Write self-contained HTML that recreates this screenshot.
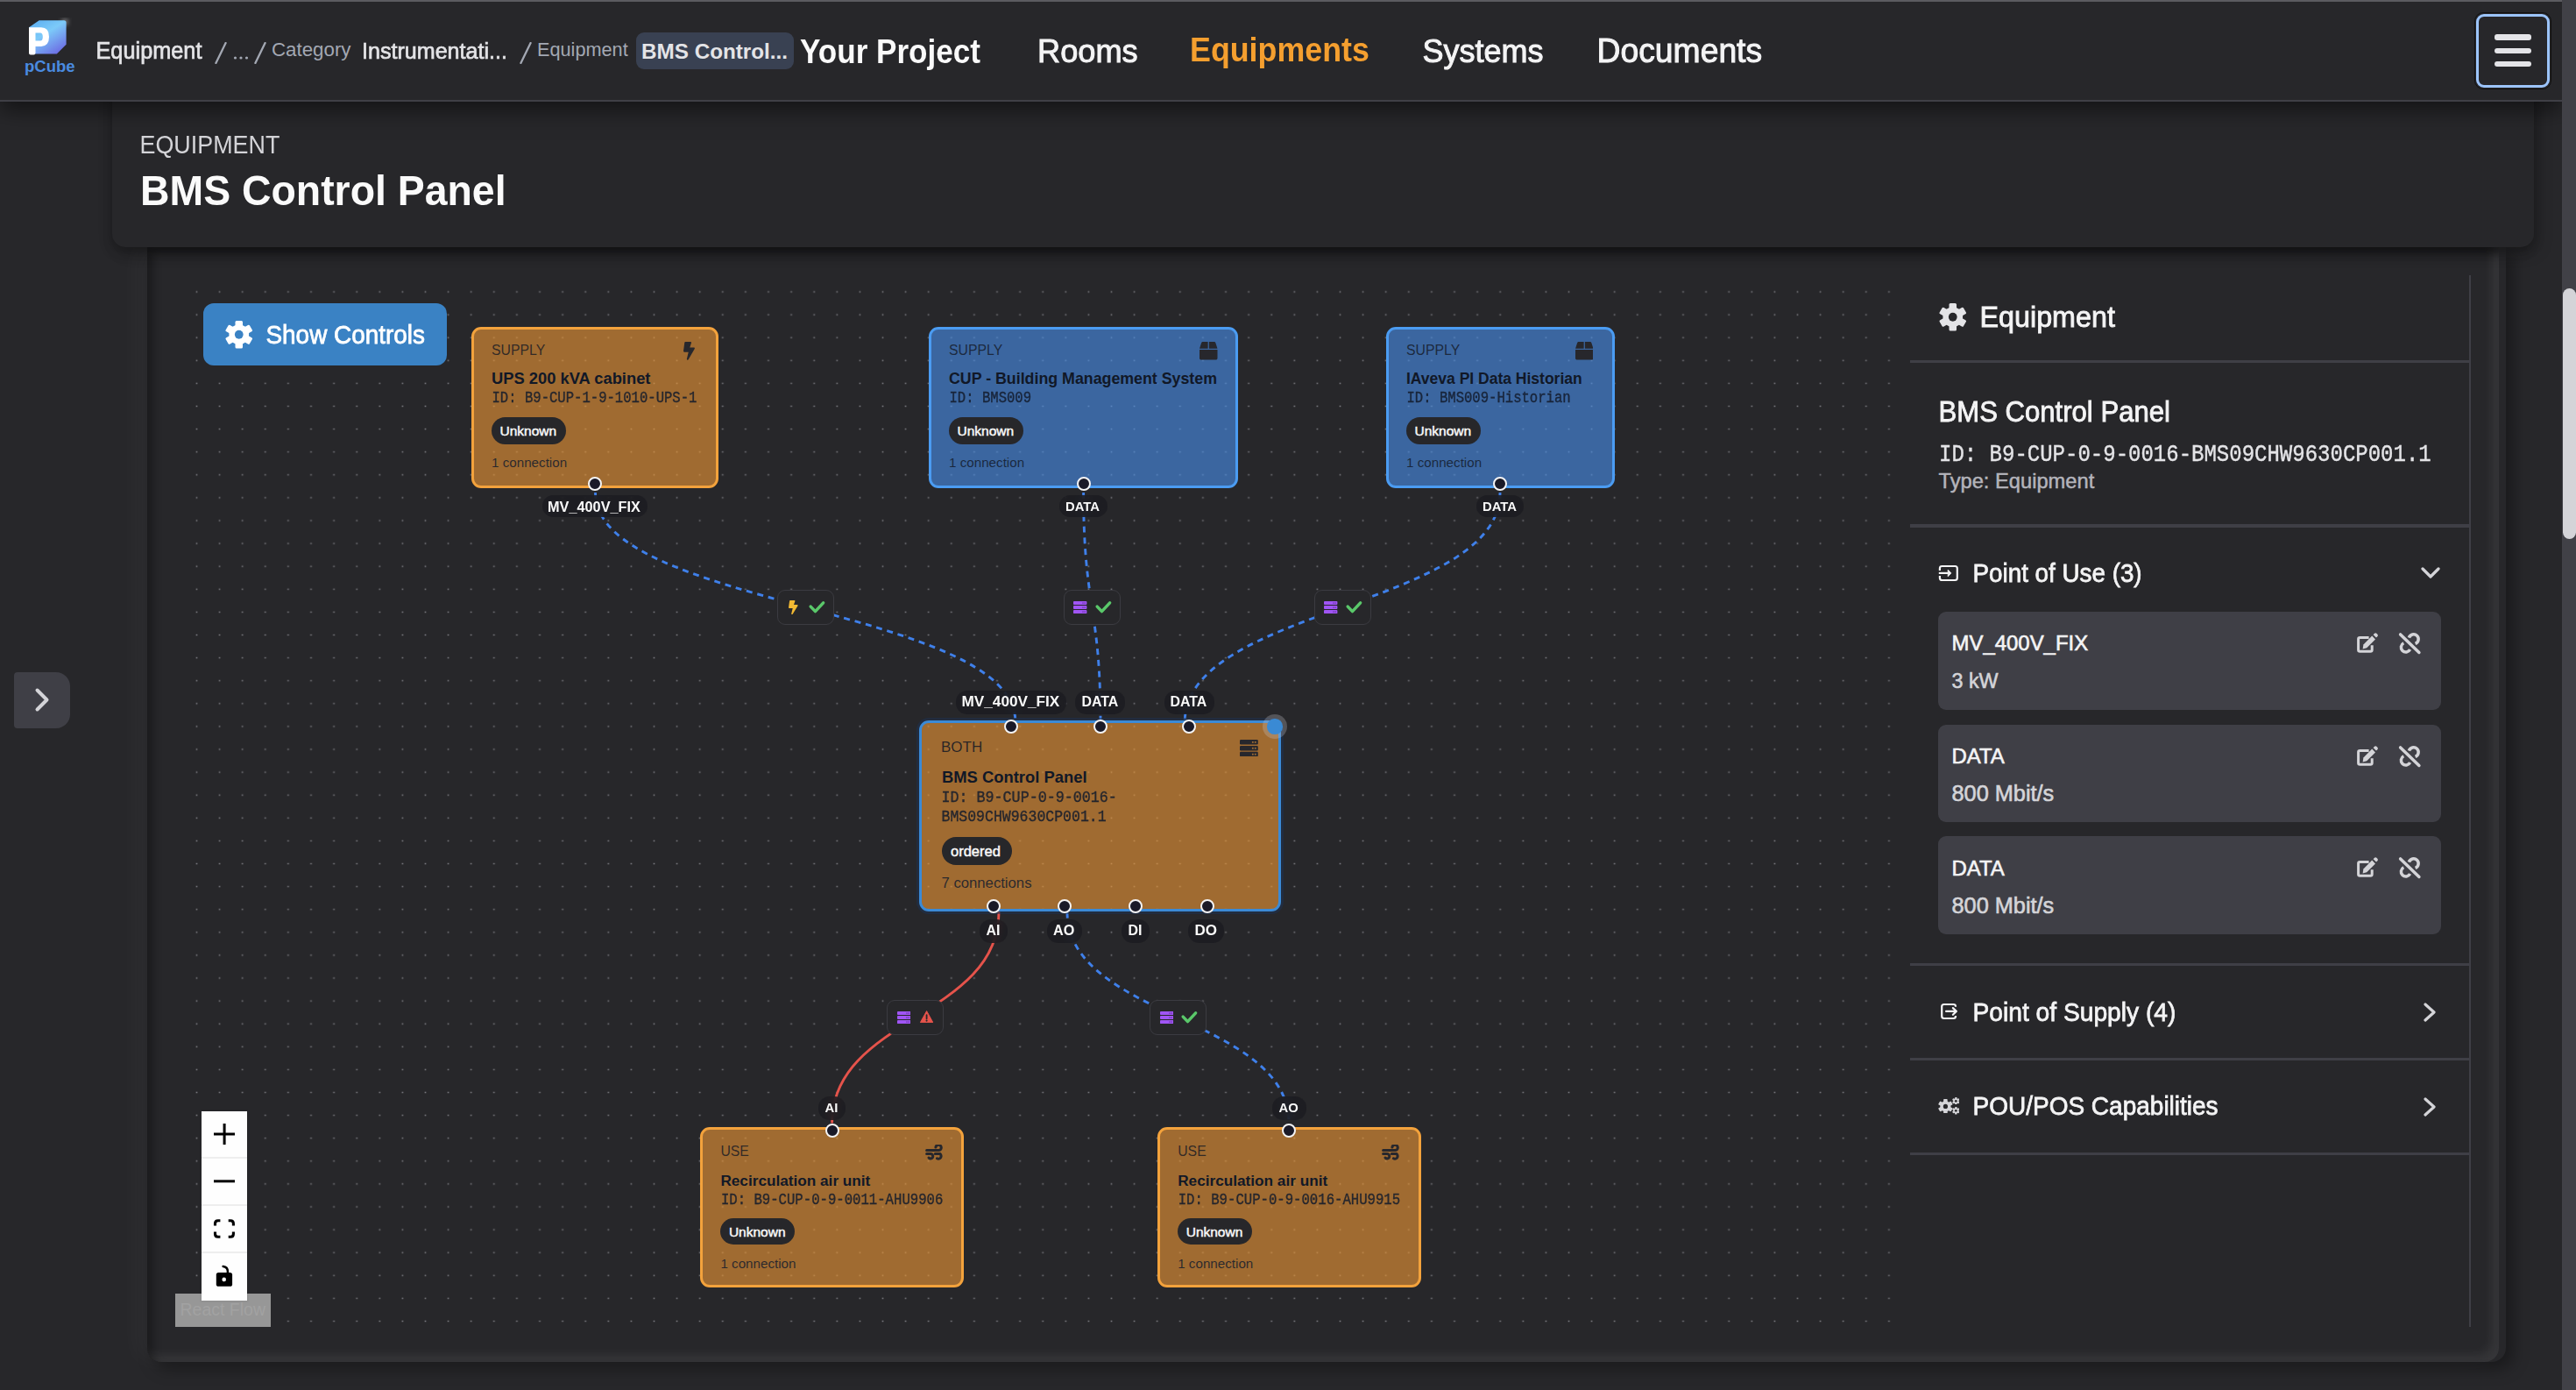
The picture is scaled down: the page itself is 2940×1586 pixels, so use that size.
<!DOCTYPE html>
<html><head><meta charset="utf-8"><title>BMS Control Panel</title>
<style>
html,body{margin:0;padding:0;width:2940px;height:1586px;overflow:hidden;background:#27272a;}
.a{position:absolute;}
.t{position:absolute;white-space:nowrap;}
</style></head><body>
<div class="a" style="left:0;top:0;width:2940px;height:1586px;background:#27272a"></div>
<div class="a" style="left:168.0px;top:282.0px;width:2692.0px;height:1272.0px;background:#27272a;border-radius:0 0 16px 16px;box-shadow:8px 8px 18px rgba(0,0,0,0.35), -14px 0 26px rgba(255,255,255,0.03)"></div>
<div class="a" style="left:168.0px;top:282.0px;width:2684.0px;height:1272.0px;background:#27272a;border-radius:0 0 16px 16px;box-shadow:inset 7px 7px 10px rgba(0,0,0,0.30), inset -8px -8px 12px rgba(255,255,255,0.07)"></div>
<div class="a" style="left:128.0px;top:100.0px;width:2764.0px;height:182.0px;background:#27272a;border-radius:0 0 15px 15px;box-shadow:0 5px 12px rgba(0,0,0,0.2), 6px 8px 18px rgba(0,0,0,0.14), -4px 8px 16px rgba(0,0,0,0.06)"></div>
<div class="t" style="left:159.5px;top:153.1px;font:normal 26.90px/26.90px 'Liberation Sans', sans-serif;color:#d4d4d8;transform:scaleY(1.07);transform-origin:0 22.86px;">EQUIPMENT</div>
<div class="t" style="left:160.0px;top:195.3px;font:bold 46.40px/46.40px 'Liberation Sans', sans-serif;color:#fafafa;transform:scaleY(1.05);transform-origin:0 39.44px;">BMS Control Panel</div>
<div class="a" style="left:0.0px;top:0.0px;width:2924.0px;height:116.0px;background:#27272a;border-bottom:2px solid #3f3f46;box-sizing:border-box;box-shadow:0 8px 24px rgba(0,0,0,0.55)"></div>
<div class="a" style="left:0.0px;top:0.0px;width:2924.0px;height:2.0px;background:#5b5b60"></div>
<svg class="a" style="left:28px;top:20px" width="56" height="48" viewBox="0 0 56 48">
<defs><linearGradient id="lg" x1="0.15" y1="0" x2="0.85" y2="1"><stop offset="0" stop-color="#5eb0f2"/><stop offset="0.4" stop-color="#7ccaf9"/><stop offset="1" stop-color="#6b66e2"/></linearGradient>
<filter id="gl" x="-50%" y="-50%" width="200%" height="200%"><feGaussianBlur stdDeviation="2.5"/></filter></defs>
<circle cx="46" cy="5" r="4" fill="rgba(255,255,255,0.35)" filter="url(#gl)"/>
<path d="M5,11.3 L16.7,3.2 H45 Q47.6,3.2 47.6,5.8 V30.7 L36.8,41.6 H9 Q5,41.6 5,37.6 Z" fill="url(#lg)"/>
<path d="M5,11.3 H19 Q28,11.3 28,22.1 Q28,32.9 19,32.9 H12.5 V40.4 Q12.5,42.4 10.5,42.4 H7 Q5,42.4 5,40.4 Z M12.5,17.6 V26.6 H18 Q20.8,26.6 20.8,22.1 Q20.8,17.6 18,17.6 Z" fill="#fff" fill-rule="evenodd"/>
</svg>
<div class="t" style="left:28.0px;top:66.8px;font:bold 18.50px/18.50px 'Liberation Sans', sans-serif;color:#4a8be0;">pCube</div>
<div class="t" style="left:109.5px;top:45.9px;font:normal 25.30px/25.30px 'Liberation Sans', sans-serif;color:#e4e4e7;transform:scaleY(1.06);transform-origin:0 21.50px;-webkit-text-stroke:0.66px #e4e4e7;">Equipment</div>
<svg class="a" style="left:244.5px;top:48.0px;" width="14.0" height="25.0" viewBox="0 0 14.00 25.00" preserveAspectRatio="none"><path d="M12.6,1 L1.4,24" stroke="#a3a8b3" stroke-width="2.3" stroke-linecap="round"/></svg>
<svg class="a" style="left:289.5px;top:48.0px;" width="14.0" height="25.0" viewBox="0 0 14.00 25.00" preserveAspectRatio="none"><path d="M12.6,1 L1.4,24" stroke="#a3a8b3" stroke-width="2.3" stroke-linecap="round"/></svg>
<svg class="a" style="left:592.8px;top:48.0px;" width="14.0" height="25.0" viewBox="0 0 14.00 25.00" preserveAspectRatio="none"><path d="M12.6,1 L1.4,24" stroke="#a3a8b3" stroke-width="2.3" stroke-linecap="round"/></svg>
<svg class="a" style="left:266.0px;top:63.0px;" width="19.0" height="6.0" viewBox="0 0 19.00 6.00" preserveAspectRatio="none"><circle cx="2.5" cy="3" r="1.6" fill="#a3a8b3"/><circle cx="9" cy="3" r="1.6" fill="#a3a8b3"/><circle cx="15.5" cy="3" r="1.6" fill="#a3a8b3"/></svg>
<div class="t" style="left:310.0px;top:46.3px;font:normal 22.30px/22.30px 'Liberation Sans', sans-serif;color:#a3a8b3;">Category</div>
<div class="t" style="left:413.0px;top:46.1px;font:normal 25.10px/25.10px 'Liberation Sans', sans-serif;color:#e4e4e7;transform:scaleY(1.06);transform-origin:0 21.34px;-webkit-text-stroke:0.65px #e4e4e7;">Instrumentati...</div>
<div class="t" style="left:613.0px;top:46.4px;font:normal 21.70px/21.70px 'Liberation Sans', sans-serif;color:#a3a8b3;">Equipment</div>
<div class="a" style="left:726.0px;top:36.5px;width:180.0px;height:42.9px;background:#394152;border-radius:9px"></div>
<div class="t" style="left:732.0px;top:46.8px;font:bold 24.25px/24.25px 'Liberation Sans', sans-serif;color:#e4e4e7;">BMS Control...</div>
<div class="t" style="left:913.0px;top:41.7px;font:bold 35.10px/35.10px 'Liberation Sans', sans-serif;color:#fafafa;transform:scaleY(1.08);transform-origin:0 29.84px;">Your Project</div>
<div class="t" style="left:1184.0px;top:40.7px;font:normal 36.20px/36.20px 'Liberation Sans', sans-serif;color:#f4f4f5;transform:scaleY(1.03);transform-origin:0 30.77px;-webkit-text-stroke:0.94px #f4f4f5;">Rooms</div>
<div class="t" style="left:1358.0px;top:41.1px;font:bold 35.80px/35.80px 'Liberation Sans', sans-serif;color:#f59f2f;transform:scaleY(1.06);transform-origin:0 30.43px;">Equipments</div>
<div class="t" style="left:1623.5px;top:40.9px;font:normal 36.00px/36.00px 'Liberation Sans', sans-serif;color:#f4f4f5;transform:scaleY(1.03);transform-origin:0 30.60px;-webkit-text-stroke:0.94px #f4f4f5;">Systems</div>
<div class="t" style="left:1822.5px;top:39.8px;font:normal 37.30px/37.30px 'Liberation Sans', sans-serif;color:#f4f4f5;transform:scaleY(1.02);transform-origin:0 31.70px;-webkit-text-stroke:0.97px #f4f4f5;">Documents</div>
<div class="a" style="left:2824.0px;top:14.0px;width:88.0px;height:88.0px;border:1px solid #111;border-radius:10px;box-sizing:border-box"></div>
<div class="a" style="left:2826.0px;top:16.0px;width:84.0px;height:84.0px;border:3px solid #9cc4fb;border-radius:9px;box-sizing:border-box"></div>
<div class="a" style="left:2846.7px;top:39.0px;width:42.3px;height:6.5px;background:#e4e4e7;border-radius:3px"></div>
<div class="a" style="left:2846.7px;top:54.8px;width:42.3px;height:6.5px;background:#e4e4e7;border-radius:3px"></div>
<div class="a" style="left:2846.7px;top:69.5px;width:42.3px;height:6.5px;background:#e4e4e7;border-radius:3px"></div>
<div class="a" style="left:2924.0px;top:0.0px;width:16.0px;height:1586.0px;background:#414147"></div>
<div class="a" style="left:2925.0px;top:329.0px;width:15.0px;height:286.0px;background:#d4d4d8;border-radius:8px"></div>
<div class="a" style="left:16.0px;top:767.0px;width:64.0px;height:64.0px;background:#3f3f46;border-radius:4px 16px 16px 4px"></div>
<svg class="a" style="left:38.0px;top:784.0px;" width="22.0" height="29.0" viewBox="0 0 22.00 29.00" preserveAspectRatio="none"><path d="M4.5,3.5 L15.5,14.5 L4.5,25.5" fill="none" stroke="#d4d4d8" stroke-width="4" stroke-linecap="round" stroke-linejoin="round"/></svg>
<svg class="a" style="left:200px;top:314px" width="1980" height="1200">
<defs><pattern id="dots" x="11.45" y="5.95" width="26.1" height="26.1" patternUnits="userSpaceOnUse">
<rect x="12.2" y="12.3" width="1.7" height="1.5" fill="#77777e"/></pattern></defs>
<rect width="100%" height="100%" fill="url(#dots)"/></svg>
<svg class="a" style="left:200px;top:314px" width="1980" height="1200"><path d="M479.5,248.0 C479.5,379.0 958.9,379.0 958.9,509.9" fill="none" stroke="#3f80ea" stroke-width="2.9" stroke-dasharray="7 5.8"/><path d="M1036.6,248.0 C1036.6,379.0 1056.0,379.0 1056.0,509.9" fill="none" stroke="#3f80ea" stroke-width="2.9" stroke-dasharray="7 5.8"/><path d="M1512.0,248.0 C1512.0,379.0 1152.2,379.0 1152.2,509.9" fill="none" stroke="#3f80ea" stroke-width="2.9" stroke-dasharray="7 5.8"/><path d="M940.0,726.5 C940.0,847.0 749.6,847.0 749.6,967.4" fill="none" stroke="#e5534b" stroke-width="2.9"/><path d="M1018.0,726.5 C1018.0,847.0 1271.0,847.0 1271.0,967.4" fill="none" stroke="#3f80ea" stroke-width="2.9" stroke-dasharray="7 5.8"/></svg>
<div class="a" style="left:886.7px;top:673.2px;width:65.0px;height:39.5px;background:#27272a;border:1.6px solid #3b3b41;border-radius:9px;box-sizing:border-box"></div>
<svg class="a" style="left:900.2px;top:685.0px;" width="10.6" height="16.2" viewBox="0 0 320 512" preserveAspectRatio="none"><path d="M296 160H180.6l42.6-129.8C227.2 15 215.7 0 200 0H56C44 0 33.8 8.9 32.2 20.8l-32 240C-1.7 275.2 9.5 288 24 288h118.7L96.6 482.5c-3.6 15.2 8 29.5 23.3 29.5 8.4 0 16.4-4.4 20.8-12l176-304c9.3-15.9-2.2-36-20.7-36z" fill="#f2b933"/></svg>
<svg class="a" style="left:921.7px;top:684.2px;" width="21.0" height="17.0" viewBox="0 0 21.00 17.00" preserveAspectRatio="none"><path d="M3.2,8.1 L8.5,13.6 L17.6,3.9" fill="none" stroke="#5ac86a" stroke-width="3.5" stroke-linecap="round" stroke-linejoin="round"/></svg>
<div class="a" style="left:1213.8px;top:673.2px;width:65.0px;height:39.5px;background:#27272a;border:1.6px solid #3b3b41;border-radius:9px;box-sizing:border-box"></div>
<svg class="a" style="left:1225.4px;top:685.9px;" width="15.4" height="14.0" viewBox="0 0 15.40 14.00" preserveAspectRatio="none"><rect x="0" y="0.00" width="15.40" height="3.97" rx="0.87" fill="#a055f5"/><rect x="10.32" y="1.43" width="1.31" height="1.27" fill="rgba(60,20,90,0.55)"/><rect x="12.47" y="1.43" width="1.31" height="1.27" fill="rgba(60,20,90,0.55)"/><rect x="0" y="5.02" width="15.40" height="3.97" rx="0.87" fill="#a055f5"/><rect x="10.32" y="6.44" width="1.31" height="1.27" fill="rgba(60,20,90,0.55)"/><rect x="12.47" y="6.44" width="1.31" height="1.27" fill="rgba(60,20,90,0.55)"/><rect x="0" y="10.03" width="15.40" height="3.97" rx="0.87" fill="#a055f5"/><rect x="10.32" y="11.46" width="1.31" height="1.27" fill="rgba(60,20,90,0.55)"/><rect x="12.47" y="11.46" width="1.31" height="1.27" fill="rgba(60,20,90,0.55)"/></svg>
<svg class="a" style="left:1248.8px;top:684.2px;" width="21.0" height="17.0" viewBox="0 0 21.00 17.00" preserveAspectRatio="none"><path d="M3.2,8.1 L8.5,13.6 L17.6,3.9" fill="none" stroke="#5ac86a" stroke-width="3.5" stroke-linecap="round" stroke-linejoin="round"/></svg>
<div class="a" style="left:1499.6px;top:673.2px;width:65.0px;height:39.5px;background:#27272a;border:1.6px solid #3b3b41;border-radius:9px;box-sizing:border-box"></div>
<svg class="a" style="left:1511.2px;top:685.9px;" width="15.4" height="14.0" viewBox="0 0 15.40 14.00" preserveAspectRatio="none"><rect x="0" y="0.00" width="15.40" height="3.97" rx="0.87" fill="#a055f5"/><rect x="10.32" y="1.43" width="1.31" height="1.27" fill="rgba(60,20,90,0.55)"/><rect x="12.47" y="1.43" width="1.31" height="1.27" fill="rgba(60,20,90,0.55)"/><rect x="0" y="5.02" width="15.40" height="3.97" rx="0.87" fill="#a055f5"/><rect x="10.32" y="6.44" width="1.31" height="1.27" fill="rgba(60,20,90,0.55)"/><rect x="12.47" y="6.44" width="1.31" height="1.27" fill="rgba(60,20,90,0.55)"/><rect x="0" y="10.03" width="15.40" height="3.97" rx="0.87" fill="#a055f5"/><rect x="10.32" y="11.46" width="1.31" height="1.27" fill="rgba(60,20,90,0.55)"/><rect x="12.47" y="11.46" width="1.31" height="1.27" fill="rgba(60,20,90,0.55)"/></svg>
<svg class="a" style="left:1534.6px;top:684.2px;" width="21.0" height="17.0" viewBox="0 0 21.00 17.00" preserveAspectRatio="none"><path d="M3.2,8.1 L8.5,13.6 L17.6,3.9" fill="none" stroke="#5ac86a" stroke-width="3.5" stroke-linecap="round" stroke-linejoin="round"/></svg>
<div class="a" style="left:1012.3px;top:1141.2px;width:65.0px;height:39.5px;background:#27272a;border:1.6px solid #3b3b41;border-radius:9px;box-sizing:border-box"></div>
<svg class="a" style="left:1023.9px;top:1153.9px;" width="15.4" height="14.0" viewBox="0 0 15.40 14.00" preserveAspectRatio="none"><rect x="0" y="0.00" width="15.40" height="3.97" rx="0.87" fill="#a055f5"/><rect x="10.32" y="1.43" width="1.31" height="1.27" fill="rgba(60,20,90,0.55)"/><rect x="12.47" y="1.43" width="1.31" height="1.27" fill="rgba(60,20,90,0.55)"/><rect x="0" y="5.02" width="15.40" height="3.97" rx="0.87" fill="#a055f5"/><rect x="10.32" y="6.44" width="1.31" height="1.27" fill="rgba(60,20,90,0.55)"/><rect x="12.47" y="6.44" width="1.31" height="1.27" fill="rgba(60,20,90,0.55)"/><rect x="0" y="10.03" width="15.40" height="3.97" rx="0.87" fill="#a055f5"/><rect x="10.32" y="11.46" width="1.31" height="1.27" fill="rgba(60,20,90,0.55)"/><rect x="12.47" y="11.46" width="1.31" height="1.27" fill="rgba(60,20,90,0.55)"/></svg>
<svg class="a" style="left:1050.0px;top:1153.0px;" width="15.2" height="14.0" viewBox="0 0 15.20 14.00" preserveAspectRatio="none"><path d="M7.60,0.6 L14.80,13.60 L0.4,13.60 Z" fill="#e5534b" stroke="#e5534b" stroke-width="1" stroke-linejoin="round"/><path d="M7.60,5.04 V9.24" stroke="#27272a" stroke-width="1.82" stroke-linecap="round"/><circle cx="7.60" cy="11.62" r="1.06" fill="#27272a"/></svg>
<div class="a" style="left:1312.0px;top:1141.2px;width:65.0px;height:39.5px;background:#27272a;border:1.6px solid #3b3b41;border-radius:9px;box-sizing:border-box"></div>
<svg class="a" style="left:1323.6px;top:1153.9px;" width="15.4" height="14.0" viewBox="0 0 15.40 14.00" preserveAspectRatio="none"><rect x="0" y="0.00" width="15.40" height="3.97" rx="0.87" fill="#a055f5"/><rect x="10.32" y="1.43" width="1.31" height="1.27" fill="rgba(60,20,90,0.55)"/><rect x="12.47" y="1.43" width="1.31" height="1.27" fill="rgba(60,20,90,0.55)"/><rect x="0" y="5.02" width="15.40" height="3.97" rx="0.87" fill="#a055f5"/><rect x="10.32" y="6.44" width="1.31" height="1.27" fill="rgba(60,20,90,0.55)"/><rect x="12.47" y="6.44" width="1.31" height="1.27" fill="rgba(60,20,90,0.55)"/><rect x="0" y="10.03" width="15.40" height="3.97" rx="0.87" fill="#a055f5"/><rect x="10.32" y="11.46" width="1.31" height="1.27" fill="rgba(60,20,90,0.55)"/><rect x="12.47" y="11.46" width="1.31" height="1.27" fill="rgba(60,20,90,0.55)"/></svg>
<svg class="a" style="left:1347.0px;top:1152.2px;" width="21.0" height="17.0" viewBox="0 0 21.00 17.00" preserveAspectRatio="none"><path d="M3.2,8.1 L8.5,13.6 L17.6,3.9" fill="none" stroke="#5ac86a" stroke-width="3.5" stroke-linecap="round" stroke-linejoin="round"/></svg>
<div class="a" style="left:538.0px;top:372.5px;width:282.4px;height:184.0px;background:rgba(236,150,54,0.62);border:3px solid #f3a23c;border-radius:11px;box-sizing:border-box;"></div>
<div class="t" style="left:561.0px;top:392.4px;font:normal 15.80px/15.80px 'Liberation Sans', sans-serif;color:rgba(20,24,36,0.8);">SUPPLY</div>
<div class="t" style="left:561.0px;top:423.1px;font:bold 18.35px/18.35px 'Liberation Sans', sans-serif;color:#111827;">UPS 200 kVA cabinet</div>
<div class="t" style="left:561.5px;top:447.8px;font:normal 15.60px/15.60px 'Liberation Mono', monospace;color:rgba(20,28,45,0.85);transform:scaleY(1.12);transform-origin:0 11.86px;-webkit-text-stroke:0.35px rgba(20,28,45,0.85);">ID: B9-CUP-1-9-1010-UPS-1</div>
<div class="a" style="left:561.0px;top:476.0px;width:85.1px;height:31.0px;background:#27272a;border-radius:16px"></div>
<div class="t" style="left:570.5px;top:483.8px;font:normal 15.50px/15.50px 'Liberation Sans', sans-serif;color:#fafafa;-webkit-text-stroke:0.46px #fafafa;">Unknown</div>
<div class="t" style="left:561.0px;top:520.1px;font:normal 15.20px/15.20px 'Liberation Sans', sans-serif;color:rgba(20,28,45,0.85);">1 connection</div>
<svg class="a" style="left:780.4px;top:390.2px;" width="12.9" height="20.7" viewBox="0 0 320 512" preserveAspectRatio="none"><path d="M296 160H180.6l42.6-129.8C227.2 15 215.7 0 200 0H56C44 0 33.8 8.9 32.2 20.8l-32 240C-1.7 275.2 9.5 288 24 288h118.7L96.6 482.5c-3.6 15.2 8 29.5 23.3 29.5 8.4 0 16.4-4.4 20.8-12l176-304c9.3-15.9-2.2-36-20.7-36z" fill="#27272c"/></svg>
<div class="a" style="left:671.4px;top:543.5px;width:16.0px;height:16.0px;background:#1a1a28;border:2px solid #f4f4f5;border-radius:50%;box-sizing:border-box"></div>
<div class="a" style="left:1060.0px;top:372.5px;width:353.0px;height:184.0px;background:rgba(72,142,232,0.62);border:3px solid #4b9cf2;border-radius:11px;box-sizing:border-box;"></div>
<div class="t" style="left:1083.0px;top:392.4px;font:normal 15.80px/15.80px 'Liberation Sans', sans-serif;color:rgba(20,24,36,0.8);">SUPPLY</div>
<div class="t" style="left:1083.0px;top:423.6px;font:bold 17.80px/17.80px 'Liberation Sans', sans-serif;color:#111827;">CUP - Building Management System</div>
<div class="t" style="left:1083.5px;top:447.8px;font:normal 15.60px/15.60px 'Liberation Mono', monospace;color:rgba(20,28,45,0.85);transform:scaleY(1.12);transform-origin:0 11.86px;-webkit-text-stroke:0.35px rgba(20,28,45,0.85);">ID: BMS009</div>
<div class="a" style="left:1083.0px;top:476.0px;width:85.1px;height:31.0px;background:#27272a;border-radius:16px"></div>
<div class="t" style="left:1092.5px;top:483.8px;font:normal 15.50px/15.50px 'Liberation Sans', sans-serif;color:#fafafa;-webkit-text-stroke:0.46px #fafafa;">Unknown</div>
<div class="t" style="left:1083.0px;top:520.1px;font:normal 15.20px/15.20px 'Liberation Sans', sans-serif;color:rgba(20,28,45,0.85);">1 connection</div>
<svg class="a" style="left:1369.3px;top:390.2px;" width="20.5" height="20.6" viewBox="0 0 512 512" preserveAspectRatio="none"><path d="M509.5 184.6L458.9 32.8C452.4 13.2 434.1 0 413.4 0H272v192h238.7c-.4-2.5-.4-5-1.2-7.4zM240 0H98.6c-20.7 0-39 13.2-45.5 32.8L2.5 184.6c-.8 2.4-.8 4.9-1.2 7.4H240V0zM0 224v240c0 26.5 21.5 48 48 48h416c26.5 0 48-21.5 48-48V224H0z" fill="#27272c"/></svg>
<div class="a" style="left:1228.6px;top:543.5px;width:16.0px;height:16.0px;background:#1a1a28;border:2px solid #f4f4f5;border-radius:50%;box-sizing:border-box"></div>
<div class="a" style="left:1582.0px;top:372.5px;width:260.8px;height:184.0px;background:rgba(72,142,232,0.62);border:3px solid #4b9cf2;border-radius:11px;box-sizing:border-box;"></div>
<div class="t" style="left:1605.0px;top:392.4px;font:normal 15.80px/15.80px 'Liberation Sans', sans-serif;color:rgba(20,24,36,0.8);">SUPPLY</div>
<div class="t" style="left:1605.0px;top:423.8px;font:bold 17.50px/17.50px 'Liberation Sans', sans-serif;color:#111827;">IAveva PI Data Historian</div>
<div class="t" style="left:1605.5px;top:447.8px;font:normal 15.60px/15.60px 'Liberation Mono', monospace;color:rgba(20,28,45,0.85);transform:scaleY(1.12);transform-origin:0 11.86px;-webkit-text-stroke:0.35px rgba(20,28,45,0.85);">ID: BMS009-Historian</div>
<div class="a" style="left:1605.0px;top:476.0px;width:85.1px;height:31.0px;background:#27272a;border-radius:16px"></div>
<div class="t" style="left:1614.5px;top:483.8px;font:normal 15.50px/15.50px 'Liberation Sans', sans-serif;color:#fafafa;-webkit-text-stroke:0.46px #fafafa;">Unknown</div>
<div class="t" style="left:1605.0px;top:520.1px;font:normal 15.20px/15.20px 'Liberation Sans', sans-serif;color:rgba(20,28,45,0.85);">1 connection</div>
<svg class="a" style="left:1797.8px;top:390.2px;" width="20.5" height="20.6" viewBox="0 0 512 512" preserveAspectRatio="none"><path d="M509.5 184.6L458.9 32.8C452.4 13.2 434.1 0 413.4 0H272v192h238.7c-.4-2.5-.4-5-1.2-7.4zM240 0H98.6c-20.7 0-39 13.2-45.5 32.8L2.5 184.6c-.8 2.4-.8 4.9-1.2 7.4H240V0zM0 224v240c0 26.5 21.5 48 48 48h416c26.5 0 48-21.5 48-48V224H0z" fill="#27272c"/></svg>
<div class="a" style="left:1704.0px;top:543.5px;width:16.0px;height:16.0px;background:#1a1a28;border:2px solid #f4f4f5;border-radius:50%;box-sizing:border-box"></div>
<div class="a" style="left:618.6px;top:565.0px;width:120.9px;height:25.0px;background:rgba(28,28,32,0.8);backdrop-filter:blur(5px);-webkit-backdrop-filter:blur(5px);border-radius:13px"></div>
<div class="t" style="left:625.0px;top:569.6px;font:bold 16.30px/16.30px 'Liberation Sans', sans-serif;color:#fafafa;">MV_400V_FIX</div>
<div class="a" style="left:1209.0px;top:565.0px;width:55.0px;height:25.0px;background:rgba(28,28,32,0.8);backdrop-filter:blur(5px);-webkit-backdrop-filter:blur(5px);border-radius:13px"></div>
<div class="t" style="left:1216.0px;top:570.9px;font:bold 14.80px/14.80px 'Liberation Sans', sans-serif;color:#fafafa;">DATA</div>
<div class="a" style="left:1685.0px;top:565.0px;width:54.0px;height:25.0px;background:rgba(28,28,32,0.8);backdrop-filter:blur(5px);-webkit-backdrop-filter:blur(5px);border-radius:13px"></div>
<div class="t" style="left:1692.0px;top:570.9px;font:bold 14.80px/14.80px 'Liberation Sans', sans-serif;color:#fafafa;">DATA</div>
<div class="a" style="left:1049.0px;top:822.0px;width:412.7px;height:218.0px;background:rgba(236,150,54,0.62);border:3px solid #3b8ad6;border-radius:11px;box-sizing:border-box;box-shadow:0 0 0 3px rgba(30,50,80,0.55)"></div>
<div class="t" style="left:1074.0px;top:844.4px;font:normal 17.00px/17.00px 'Liberation Sans', sans-serif;color:rgba(20,24,36,0.85);">BOTH</div>
<svg class="a" style="left:1415.1px;top:844.0px;" width="20.8" height="19.3" viewBox="0 0 20.80 19.30" preserveAspectRatio="none"><rect x="0" y="0.00" width="20.80" height="5.47" rx="1.20" fill="#27272c"/><rect x="13.94" y="1.97" width="1.77" height="1.75" fill="rgba(170,115,55,0.95)"/><rect x="16.85" y="1.97" width="1.77" height="1.75" fill="rgba(170,115,55,0.95)"/><rect x="0" y="6.92" width="20.80" height="5.47" rx="1.20" fill="#27272c"/><rect x="13.94" y="8.88" width="1.77" height="1.75" fill="rgba(170,115,55,0.95)"/><rect x="16.85" y="8.88" width="1.77" height="1.75" fill="rgba(170,115,55,0.95)"/><rect x="0" y="13.83" width="20.80" height="5.47" rx="1.20" fill="#27272c"/><rect x="13.94" y="15.80" width="1.77" height="1.75" fill="rgba(170,115,55,0.95)"/><rect x="16.85" y="15.80" width="1.77" height="1.75" fill="rgba(170,115,55,0.95)"/></svg>
<div class="t" style="left:1075.0px;top:877.7px;font:bold 18.40px/18.40px 'Liberation Sans', sans-serif;color:#111827;">BMS Control Panel</div>
<div class="t" style="left:1074.5px;top:902.9px;font:normal 16.70px/16.70px 'Liberation Mono', monospace;color:rgba(20,28,45,0.85);transform:scaleY(1.12);transform-origin:0 12.69px;-webkit-text-stroke:0.35px rgba(20,28,45,0.85);">ID: B9-CUP-0-9-0016-</div>
<div class="t" style="left:1074.5px;top:925.3px;font:normal 16.50px/16.50px 'Liberation Mono', monospace;color:rgba(20,28,45,0.85);transform:scaleY(1.12);transform-origin:0 12.54px;-webkit-text-stroke:0.35px rgba(20,28,45,0.85);">BMS09CHW9630CP001.1</div>
<div class="a" style="left:1075.0px;top:954.8px;width:79.8px;height:32.4px;background:#27272a;border-radius:16px"></div>
<div class="t" style="left:1085.0px;top:962.5px;font:normal 16.50px/16.50px 'Liberation Sans', sans-serif;color:#fafafa;-webkit-text-stroke:0.49px #fafafa;">ordered</div>
<div class="t" style="left:1074.5px;top:1000.1px;font:normal 16.70px/16.70px 'Liberation Sans', sans-serif;color:rgba(20,28,45,0.85);">7 connections</div>
<div class="a" style="left:1146.0px;top:821.2px;width:16.0px;height:16.0px;background:#1a1a28;border:2px solid #f4f4f5;border-radius:50%;box-sizing:border-box"></div>
<div class="a" style="left:1247.5px;top:821.2px;width:16.0px;height:16.0px;background:#1a1a28;border:2px solid #f4f4f5;border-radius:50%;box-sizing:border-box"></div>
<div class="a" style="left:1349.0px;top:821.2px;width:16.0px;height:16.0px;background:#1a1a28;border:2px solid #f4f4f5;border-radius:50%;box-sizing:border-box"></div>
<div class="a" style="left:1125.6px;top:1025.6px;width:16.0px;height:16.0px;background:#1a1a28;border:2px solid #f4f4f5;border-radius:50%;box-sizing:border-box"></div>
<div class="a" style="left:1207.0px;top:1025.6px;width:16.0px;height:16.0px;background:#1a1a28;border:2px solid #f4f4f5;border-radius:50%;box-sizing:border-box"></div>
<div class="a" style="left:1288.0px;top:1025.6px;width:16.0px;height:16.0px;background:#1a1a28;border:2px solid #f4f4f5;border-radius:50%;box-sizing:border-box"></div>
<div class="a" style="left:1369.5px;top:1025.6px;width:16.0px;height:16.0px;background:#1a1a28;border:2px solid #f4f4f5;border-radius:50%;box-sizing:border-box"></div>
<div class="a" style="left:1441.0px;top:815.0px;width:28.0px;height:28.0px;background:rgba(200,200,210,0.28);border-radius:50%"></div>
<div class="a" style="left:1446.4px;top:820.4px;width:17.2px;height:17.2px;background:#3a8ad4;border-radius:50%"></div>
<div class="a" style="left:1091.0px;top:788.0px;width:126.0px;height:27.4px;background:rgba(28,28,32,0.8);backdrop-filter:blur(5px);-webkit-backdrop-filter:blur(5px);border-radius:13px"></div>
<div class="t" style="left:1097.5px;top:792.1px;font:bold 17.20px/17.20px 'Liberation Sans', sans-serif;color:#fafafa;">MV_400V_FIX</div>
<div class="a" style="left:1227.0px;top:788.0px;width:56.7px;height:27.4px;background:rgba(28,28,32,0.8);backdrop-filter:blur(5px);-webkit-backdrop-filter:blur(5px);border-radius:13px"></div>
<div class="t" style="left:1234.5px;top:793.2px;font:bold 15.90px/15.90px 'Liberation Sans', sans-serif;color:#fafafa;">DATA</div>
<div class="a" style="left:1328.5px;top:788.0px;width:57.1px;height:27.4px;background:rgba(28,28,32,0.8);backdrop-filter:blur(5px);-webkit-backdrop-filter:blur(5px);border-radius:13px"></div>
<div class="t" style="left:1335.5px;top:793.2px;font:bold 15.90px/15.90px 'Liberation Sans', sans-serif;color:#fafafa;">DATA</div>
<div class="a" style="left:1118.0px;top:1049.0px;width:32.0px;height:27.0px;background:rgba(28,28,32,0.8);backdrop-filter:blur(5px);-webkit-backdrop-filter:blur(5px);border-radius:13px"></div>
<div class="t" style="left:1125.5px;top:1053.5px;font:bold 15.90px/15.90px 'Liberation Sans', sans-serif;color:#fafafa;">AI</div>
<div class="a" style="left:1195.0px;top:1049.0px;width:40.0px;height:27.0px;background:rgba(28,28,32,0.8);backdrop-filter:blur(5px);-webkit-backdrop-filter:blur(5px);border-radius:13px"></div>
<div class="t" style="left:1202.0px;top:1053.2px;font:bold 16.20px/16.20px 'Liberation Sans', sans-serif;color:#fafafa;">AO</div>
<div class="a" style="left:1280.0px;top:1049.0px;width:32.0px;height:27.0px;background:rgba(28,28,32,0.8);backdrop-filter:blur(5px);-webkit-backdrop-filter:blur(5px);border-radius:13px"></div>
<div class="t" style="left:1287.5px;top:1053.5px;font:bold 15.90px/15.90px 'Liberation Sans', sans-serif;color:#fafafa;">DI</div>
<div class="a" style="left:1356.0px;top:1049.0px;width:41.0px;height:27.0px;background:rgba(28,28,32,0.8);backdrop-filter:blur(5px);-webkit-backdrop-filter:blur(5px);border-radius:13px"></div>
<div class="t" style="left:1363.5px;top:1052.5px;font:bold 17.00px/17.00px 'Liberation Sans', sans-serif;color:#fafafa;">DO</div>
<div class="a" style="left:799.0px;top:1286.0px;width:300.8px;height:183.3px;background:rgba(236,150,54,0.62);border:3px solid #f3a23c;border-radius:11px;box-sizing:border-box;"></div>
<div class="t" style="left:822.4px;top:1306.0px;font:normal 15.80px/15.80px 'Liberation Sans', sans-serif;color:rgba(20,24,36,0.8);">USE</div>
<svg class="a" style="left:1055.5px;top:1305.5px;" width="22.0" height="20.0" viewBox="0 0 22.00 20.00" preserveAspectRatio="none"><path d="M1.6,6.6 H15.2 A3.2,3.2 0 1 0 11.9,3.1" fill="none" stroke="#27272c" stroke-width="3.0" stroke-linecap="round"/><path d="M1.6,10.6 H6.2 A2.7,2.7 0 1 1 4.0,15.0" fill="none" stroke="#27272c" stroke-width="3.0" stroke-linecap="round"/><path d="M11.2,10.4 H16.6 A3.1,3.1 0 1 1 13.4,15.8" fill="none" stroke="#27272c" stroke-width="3.0" stroke-linecap="round"/></svg>
<div class="t" style="left:822.4px;top:1338.5px;font:bold 17.20px/17.20px 'Liberation Sans', sans-serif;color:#111827;">Recirculation air unit</div>
<div class="t" style="left:822.9px;top:1362.6px;font:normal 15.65px/15.65px 'Liberation Mono', monospace;color:rgba(20,28,45,0.85);transform:scaleY(1.12);transform-origin:0 11.89px;-webkit-text-stroke:0.35px rgba(20,28,45,0.85);">ID: B9-CUP-0-9-0011-AHU9906</div>
<div class="a" style="left:822.4px;top:1389.5px;width:85.1px;height:30.5px;background:#27272a;border-radius:16px"></div>
<div class="t" style="left:831.9px;top:1397.8px;font:normal 15.50px/15.50px 'Liberation Sans', sans-serif;color:#fafafa;-webkit-text-stroke:0.46px #fafafa;">Unknown</div>
<div class="t" style="left:822.4px;top:1434.4px;font:normal 15.20px/15.20px 'Liberation Sans', sans-serif;color:rgba(20,28,45,0.85);">1 connection</div>
<div class="a" style="left:941.6px;top:1282.4px;width:16.0px;height:16.0px;background:#1a1a28;border:2px solid #f4f4f5;border-radius:50%;box-sizing:border-box"></div>
<div class="a" style="left:1320.8px;top:1286.0px;width:300.8px;height:183.3px;background:rgba(236,150,54,0.62);border:3px solid #f3a23c;border-radius:11px;box-sizing:border-box;"></div>
<div class="t" style="left:1344.2px;top:1306.0px;font:normal 15.80px/15.80px 'Liberation Sans', sans-serif;color:rgba(20,24,36,0.8);">USE</div>
<svg class="a" style="left:1577.3px;top:1305.5px;" width="22.0" height="20.0" viewBox="0 0 22.00 20.00" preserveAspectRatio="none"><path d="M1.6,6.6 H15.2 A3.2,3.2 0 1 0 11.9,3.1" fill="none" stroke="#27272c" stroke-width="3.0" stroke-linecap="round"/><path d="M1.6,10.6 H6.2 A2.7,2.7 0 1 1 4.0,15.0" fill="none" stroke="#27272c" stroke-width="3.0" stroke-linecap="round"/><path d="M11.2,10.4 H16.6 A3.1,3.1 0 1 1 13.4,15.8" fill="none" stroke="#27272c" stroke-width="3.0" stroke-linecap="round"/></svg>
<div class="t" style="left:1344.2px;top:1338.5px;font:bold 17.20px/17.20px 'Liberation Sans', sans-serif;color:#111827;">Recirculation air unit</div>
<div class="t" style="left:1344.7px;top:1362.6px;font:normal 15.65px/15.65px 'Liberation Mono', monospace;color:rgba(20,28,45,0.85);transform:scaleY(1.12);transform-origin:0 11.89px;-webkit-text-stroke:0.35px rgba(20,28,45,0.85);">ID: B9-CUP-0-9-0016-AHU9915</div>
<div class="a" style="left:1344.2px;top:1389.5px;width:85.1px;height:30.5px;background:#27272a;border-radius:16px"></div>
<div class="t" style="left:1353.7px;top:1397.8px;font:normal 15.50px/15.50px 'Liberation Sans', sans-serif;color:#fafafa;-webkit-text-stroke:0.46px #fafafa;">Unknown</div>
<div class="t" style="left:1344.2px;top:1434.4px;font:normal 15.20px/15.20px 'Liberation Sans', sans-serif;color:rgba(20,28,45,0.85);">1 connection</div>
<div class="a" style="left:1463.0px;top:1282.4px;width:16.0px;height:16.0px;background:#1a1a28;border:2px solid #f4f4f5;border-radius:50%;box-sizing:border-box"></div>
<div class="a" style="left:934.0px;top:1251.0px;width:30.6px;height:26.7px;background:rgba(28,28,32,0.8);backdrop-filter:blur(5px);-webkit-backdrop-filter:blur(5px);border-radius:13px"></div>
<div class="t" style="left:941.5px;top:1257.1px;font:bold 14.80px/14.80px 'Liberation Sans', sans-serif;color:#fafafa;">AI</div>
<div class="a" style="left:1451.7px;top:1251.0px;width:39.3px;height:26.7px;background:rgba(28,28,32,0.8);backdrop-filter:blur(5px);-webkit-backdrop-filter:blur(5px);border-radius:13px"></div>
<div class="t" style="left:1459.5px;top:1257.1px;font:bold 14.80px/14.80px 'Liberation Sans', sans-serif;color:#fafafa;">AO</div>
<div class="a" style="left:232.0px;top:346.0px;width:278.0px;height:71.4px;background:#3a82c4;border-radius:12px"></div>
<svg class="a" style="left:256.5px;top:366.0px;" width="31.5" height="31.5" viewBox="0 0 31.50 31.50" preserveAspectRatio="none"><circle cx="15.75" cy="15.75" r="11.34" fill="#ffffff"/><rect x="11.50" y="0.00" width="8.51" height="31.50" rx="1.53" fill="#ffffff" transform="rotate(0 15.75 15.75)"/><rect x="11.50" y="0.00" width="8.51" height="31.50" rx="1.53" fill="#ffffff" transform="rotate(60 15.75 15.75)"/><rect x="11.50" y="0.00" width="8.51" height="31.50" rx="1.53" fill="#ffffff" transform="rotate(120 15.75 15.75)"/><circle cx="15.75" cy="15.75" r="4.88" fill="#3a82c4"/></svg>
<div class="t" style="left:303.5px;top:369.0px;font:normal 27.90px/27.90px 'Liberation Sans', sans-serif;color:#ffffff;transform:scaleY(1.08);transform-origin:0 23.71px;-webkit-text-stroke:0.73px #ffffff;">Show Controls</div>
<div class="a" style="left:200.0px;top:1476.0px;width:109.0px;height:38.0px;background:#979797"></div>
<div class="t" style="left:205.5px;top:1484.9px;font:normal 19.50px/19.50px 'Liberation Sans', sans-serif;color:#a2a2a2;">React Flow</div>
<div class="a" style="left:230.0px;top:1268.0px;width:52.0px;height:216.0px;background:#fefefe;box-shadow:0 0 2px 1px rgba(0,0,0,0.08)"></div>
<div class="a" style="left:230.0px;top:1319.8px;width:52.0px;height:2.0px;background:#eeeeee"></div>
<div class="a" style="left:230.0px;top:1373.7px;width:52.0px;height:2.0px;background:#eeeeee"></div>
<div class="a" style="left:230.0px;top:1427.8px;width:52.0px;height:2.0px;background:#eeeeee"></div>
<svg class="a" style="left:243.8px;top:1282.0px;" width="24.2" height="24.0" viewBox="0 0 24.20 24.00" preserveAspectRatio="none"><path d="M12.1,0 V24 M0,12 H24.2" stroke="#000" stroke-width="3"/></svg>
<svg class="a" style="left:243.8px;top:1345.2px;" width="24.2" height="5.8" viewBox="0 0 24.20 5.80" preserveAspectRatio="none"><path d="M0,2.8 H24.2" stroke="#000" stroke-width="3"/></svg>
<svg class="a" style="left:228.0px;top:1380.0px;" width="56.0" height="100.0" viewBox="0 0 56.00 100.00" preserveAspectRatio="none"><path d="M17.5,18.4 V16.0 Q17.5,12.7 20.8,12.7 H23.4 M32.7,12.7 H35.1 Q38.4,12.7 38.4,16.0 V18.4 M38.4,25.5 V27.9 Q38.4,31.2 35.1,31.2 H32.7 M23.4,31.2 H20.8 Q17.5,31.2 17.5,27.9 V25.5" fill="none" stroke="#000" stroke-width="3.1"/><rect x="18.8" y="72" width="18.3" height="15.8" rx="2.6" fill="#000"/><circle cx="27.7" cy="79.9" r="2.3" fill="#fff"/><path d="M31.9,72.5 V70.8 Q31.9,65.6 26.6,65.0" fill="none" stroke="#000" stroke-width="2.5" stroke-linecap="round"/></svg>
<div class="a" style="left:2818.0px;top:314.0px;width:2.0px;height:1200.0px;background:#3f3f46"></div>
<svg class="a" style="left:2212.5px;top:346.0px;" width="31.5" height="31.5" viewBox="0 0 31.50 31.50" preserveAspectRatio="none"><circle cx="15.75" cy="15.75" r="11.34" fill="#e4e4e7"/><rect x="11.50" y="0.00" width="8.51" height="31.50" rx="1.53" fill="#e4e4e7" transform="rotate(0 15.75 15.75)"/><rect x="11.50" y="0.00" width="8.51" height="31.50" rx="1.53" fill="#e4e4e7" transform="rotate(60 15.75 15.75)"/><rect x="11.50" y="0.00" width="8.51" height="31.50" rx="1.53" fill="#e4e4e7" transform="rotate(120 15.75 15.75)"/><circle cx="15.75" cy="15.75" r="4.88" fill="#27272a"/></svg>
<div class="t" style="left:2259.5px;top:346.0px;font:normal 32.30px/32.30px 'Liberation Sans', sans-serif;color:#f4f4f5;transform:scaleY(1.04);transform-origin:0 27.45px;-webkit-text-stroke:0.84px #f4f4f5;">Equipment</div>
<div class="a" style="left:2180.0px;top:410.5px;width:638.0px;height:3.5px;background:#3f3f46"></div>
<div class="t" style="left:2212.5px;top:454.9px;font:normal 31.10px/31.10px 'Liberation Sans', sans-serif;color:#f4f4f5;transform:scaleY(1.07);transform-origin:0 26.44px;-webkit-text-stroke:0.81px #f4f4f5;">BMS Control Panel</div>
<div class="t" style="left:2213.0px;top:507.8px;font:normal 24.00px/24.00px 'Liberation Mono', monospace;color:#e4e4e7;transform:scaleY(1.12);transform-origin:0 18.24px;-webkit-text-stroke:0.35px #e4e4e7;">ID: B9-CUP-0-9-0016-BMS09CHW9630CP001.1</div>
<div class="t" style="left:2212.5px;top:537.9px;font:normal 23.70px/23.70px 'Liberation Sans', sans-serif;color:#b4b4bb;-webkit-text-stroke:0.47px #b4b4bb;">Type: Equipment</div>
<div class="a" style="left:2180.0px;top:598.0px;width:638.0px;height:3.5px;background:#3f3f46"></div>
<svg class="a" style="left:2205.0px;top:638.0px;" width="40.0" height="32.0" viewBox="0 0 40.00 32.00" preserveAspectRatio="none"><path d="M8.9,12.9 V10.5 Q8.9,8 11.4,8 H26.3 Q28.8,8 28.8,10.5 V21.5 Q28.8,24 26.3,24 H11.4 Q8.9,24 8.9,21.5 V19.1" fill="none" stroke="#f4f4f5" stroke-width="2.2"/><path d="M7.8,15.9 H18.8" stroke="#f4f4f5" stroke-width="2.2"/><path d="M18.2,12 L21.9,15.9 L18.2,19.9 Z" fill="#f4f4f5" stroke="#f4f4f5" stroke-width="0.8" stroke-linejoin="round"/></svg>
<div class="t" style="left:2251.5px;top:641.1px;font:normal 27.80px/27.80px 'Liberation Sans', sans-serif;color:#f4f4f5;transform:scaleY(1.06);transform-origin:0 23.63px;-webkit-text-stroke:0.72px #f4f4f5;">Point of Use (3)</div>
<svg class="a" style="left:2763.0px;top:647.0px;" width="22.0" height="14.0" viewBox="0 0 22.00 14.00" preserveAspectRatio="none"><path d="M2,2 L11,11 L20,2" fill="none" stroke="#d4d4d8" stroke-width="3.2" stroke-linecap="round" stroke-linejoin="round"/></svg>
<div class="a" style="left:2212.0px;top:698.0px;width:573.6px;height:111.6px;background:#3f3f46;border-radius:9px"></div>
<div class="t" style="left:2227.5px;top:722.2px;font:normal 23.95px/23.95px 'Liberation Sans', sans-serif;color:#f4f4f5;-webkit-text-stroke:0.62px #f4f4f5;">MV_400V_FIX</div>
<div class="t" style="left:2227.5px;top:766.0px;font:normal 23.30px/23.30px 'Liberation Sans', sans-serif;color:#d4d4d8;-webkit-text-stroke:0.58px #d4d4d8;">3 kW</div>
<svg class="a" style="left:2680.0px;top:715.0px;" width="40.0" height="35.0" viewBox="0 0 40.00 35.00" preserveAspectRatio="none"><path d="M23.6,12.5 H13.4 Q11.6,12.5 11.6,14.3 V26.4 Q11.6,28.2 13.4,28.2 H25.4 Q27.2,28.2 27.2,26.4 V21.2" fill="none" stroke="#d4d4d8" stroke-width="3"/><path d="M16.6,25.6 L17.4,20.4 L27.2,10.6 L31.0,14.4 L21.2,24.2 Z" fill="#d4d4d8"/><path d="M28.6,9.2 L30.0,7.8 Q31.2,6.6 32.4,7.8 L33.4,8.8 Q34.6,10.0 33.4,11.2 L32.0,12.6 Z" fill="#d4d4d8"/></svg>
<svg class="a" style="left:2680.0px;top:715.0px;" width="90.0" height="35.0" viewBox="0 0 90.00 35.00" preserveAspectRatio="none"><path d="M59.6,8.9 L80.9,29.5" stroke="#d4d4d8" stroke-width="3.5" stroke-linecap="round"/><path d="M69.4,12.6 A5.5,5.5 0 1 1 76.6,19.4" fill="none" stroke="#d4d4d8" stroke-width="3.5" stroke-linecap="butt"/><path d="M63.3,18.8 A5.4,5.4 0 1 0 70.6,26.0" fill="none" stroke="#d4d4d8" stroke-width="3.5" stroke-linecap="butt"/></svg>
<div class="a" style="left:2212.0px;top:826.6px;width:573.6px;height:111.6px;background:#3f3f46;border-radius:9px"></div>
<div class="t" style="left:2227.5px;top:850.8px;font:normal 23.95px/23.95px 'Liberation Sans', sans-serif;color:#f4f4f5;-webkit-text-stroke:0.62px #f4f4f5;">DATA</div>
<div class="t" style="left:2227.5px;top:892.9px;font:normal 25.30px/25.30px 'Liberation Sans', sans-serif;color:#d4d4d8;-webkit-text-stroke:0.63px #d4d4d8;">800 Mbit/s</div>
<svg class="a" style="left:2680.0px;top:843.6px;" width="40.0" height="35.0" viewBox="0 0 40.00 35.00" preserveAspectRatio="none"><path d="M23.6,12.5 H13.4 Q11.6,12.5 11.6,14.3 V26.4 Q11.6,28.2 13.4,28.2 H25.4 Q27.2,28.2 27.2,26.4 V21.2" fill="none" stroke="#d4d4d8" stroke-width="3"/><path d="M16.6,25.6 L17.4,20.4 L27.2,10.6 L31.0,14.4 L21.2,24.2 Z" fill="#d4d4d8"/><path d="M28.6,9.2 L30.0,7.8 Q31.2,6.6 32.4,7.8 L33.4,8.8 Q34.6,10.0 33.4,11.2 L32.0,12.6 Z" fill="#d4d4d8"/></svg>
<svg class="a" style="left:2680.0px;top:843.6px;" width="90.0" height="35.0" viewBox="0 0 90.00 35.00" preserveAspectRatio="none"><path d="M59.6,8.9 L80.9,29.5" stroke="#d4d4d8" stroke-width="3.5" stroke-linecap="round"/><path d="M69.4,12.6 A5.5,5.5 0 1 1 76.6,19.4" fill="none" stroke="#d4d4d8" stroke-width="3.5" stroke-linecap="butt"/><path d="M63.3,18.8 A5.4,5.4 0 1 0 70.6,26.0" fill="none" stroke="#d4d4d8" stroke-width="3.5" stroke-linecap="butt"/></svg>
<div class="a" style="left:2212.0px;top:954.4px;width:573.6px;height:111.6px;background:#3f3f46;border-radius:9px"></div>
<div class="t" style="left:2227.5px;top:978.6px;font:normal 23.95px/23.95px 'Liberation Sans', sans-serif;color:#f4f4f5;-webkit-text-stroke:0.62px #f4f4f5;">DATA</div>
<div class="t" style="left:2227.5px;top:1020.7px;font:normal 25.30px/25.30px 'Liberation Sans', sans-serif;color:#d4d4d8;-webkit-text-stroke:0.63px #d4d4d8;">800 Mbit/s</div>
<svg class="a" style="left:2680.0px;top:971.4px;" width="40.0" height="35.0" viewBox="0 0 40.00 35.00" preserveAspectRatio="none"><path d="M23.6,12.5 H13.4 Q11.6,12.5 11.6,14.3 V26.4 Q11.6,28.2 13.4,28.2 H25.4 Q27.2,28.2 27.2,26.4 V21.2" fill="none" stroke="#d4d4d8" stroke-width="3"/><path d="M16.6,25.6 L17.4,20.4 L27.2,10.6 L31.0,14.4 L21.2,24.2 Z" fill="#d4d4d8"/><path d="M28.6,9.2 L30.0,7.8 Q31.2,6.6 32.4,7.8 L33.4,8.8 Q34.6,10.0 33.4,11.2 L32.0,12.6 Z" fill="#d4d4d8"/></svg>
<svg class="a" style="left:2680.0px;top:971.4px;" width="90.0" height="35.0" viewBox="0 0 90.00 35.00" preserveAspectRatio="none"><path d="M59.6,8.9 L80.9,29.5" stroke="#d4d4d8" stroke-width="3.5" stroke-linecap="round"/><path d="M69.4,12.6 A5.5,5.5 0 1 1 76.6,19.4" fill="none" stroke="#d4d4d8" stroke-width="3.5" stroke-linecap="butt"/><path d="M63.3,18.8 A5.4,5.4 0 1 0 70.6,26.0" fill="none" stroke="#d4d4d8" stroke-width="3.5" stroke-linecap="butt"/></svg>
<div class="a" style="left:2180.0px;top:1098.5px;width:638.0px;height:3.5px;background:#3f3f46"></div>
<svg class="a" style="left:2205.0px;top:1138.0px;" width="40.0" height="32.0" viewBox="0 0 40.00 32.00" preserveAspectRatio="none"><path d="M27,10.8 V10.5 Q27,8 24.5,8 H13.7 Q11.2,8 11.2,10.5 V21.5 Q11.2,24 13.7,24 H24.5 Q27,24 27,21.5 V20.9" fill="none" stroke="#f4f4f5" stroke-width="2.2"/><path d="M16.1,15.9 H27.2" stroke="#f4f4f5" stroke-width="2.2" stroke-linecap="round"/><path d="M23.9,12.1 L27.8,15.9 L23.9,19.8" fill="none" stroke="#f4f4f5" stroke-width="2.2" stroke-linecap="round" stroke-linejoin="round"/></svg>
<div class="t" style="left:2251.5px;top:1140.8px;font:normal 28.20px/28.20px 'Liberation Sans', sans-serif;color:#f4f4f5;transform:scaleY(1.06);transform-origin:0 23.97px;-webkit-text-stroke:0.73px #f4f4f5;">Point of Supply (4)</div>
<svg class="a" style="left:2765.0px;top:1144.0px;" width="18.0" height="22.0" viewBox="0 0 18.00 22.00" preserveAspectRatio="none"><path d="M3,2 L13,11 L3,20" fill="none" stroke="#d4d4d8" stroke-width="3.2" stroke-linecap="round" stroke-linejoin="round"/></svg>
<div class="a" style="left:2180.0px;top:1206.5px;width:638.0px;height:3.5px;background:#3f3f46"></div>
<svg class="a" style="left:2212.0px;top:1253.6px;" width="16.8" height="16.8" viewBox="0 0 16.80 16.80" preserveAspectRatio="none"><circle cx="8.40" cy="8.40" r="6.05" fill="#d4d4d8"/><rect x="6.13" y="0.00" width="4.54" height="16.80" rx="0.82" fill="#d4d4d8" transform="rotate(0 8.40 8.40)"/><rect x="6.13" y="0.00" width="4.54" height="16.80" rx="0.82" fill="#d4d4d8" transform="rotate(60 8.40 8.40)"/><rect x="6.13" y="0.00" width="4.54" height="16.80" rx="0.82" fill="#d4d4d8" transform="rotate(120 8.40 8.40)"/><circle cx="8.40" cy="8.40" r="2.60" fill="#27272a"/></svg>
<svg class="a" style="left:2227.6px;top:1251.6px;" width="8.6" height="8.6" viewBox="0 0 8.60 8.60" preserveAspectRatio="none"><circle cx="4.30" cy="4.30" r="3.10" fill="#d4d4d8"/><rect x="3.14" y="0.00" width="2.32" height="8.60" rx="0.42" fill="#d4d4d8" transform="rotate(0 4.30 4.30)"/><rect x="3.14" y="0.00" width="2.32" height="8.60" rx="0.42" fill="#d4d4d8" transform="rotate(60 4.30 4.30)"/><rect x="3.14" y="0.00" width="2.32" height="8.60" rx="0.42" fill="#d4d4d8" transform="rotate(120 4.30 4.30)"/><circle cx="4.30" cy="4.30" r="1.33" fill="#27272a"/></svg>
<svg class="a" style="left:2227.6px;top:1263.4px;" width="8.6" height="8.6" viewBox="0 0 8.60 8.60" preserveAspectRatio="none"><circle cx="4.30" cy="4.30" r="3.10" fill="#d4d4d8"/><rect x="3.14" y="0.00" width="2.32" height="8.60" rx="0.42" fill="#d4d4d8" transform="rotate(0 4.30 4.30)"/><rect x="3.14" y="0.00" width="2.32" height="8.60" rx="0.42" fill="#d4d4d8" transform="rotate(60 4.30 4.30)"/><rect x="3.14" y="0.00" width="2.32" height="8.60" rx="0.42" fill="#d4d4d8" transform="rotate(120 4.30 4.30)"/><circle cx="4.30" cy="4.30" r="1.33" fill="#27272a"/></svg>
<div class="t" style="left:2251.5px;top:1249.2px;font:normal 28.00px/28.00px 'Liberation Sans', sans-serif;color:#f4f4f5;transform:scaleY(1.06);transform-origin:0 23.80px;-webkit-text-stroke:0.73px #f4f4f5;">POU/POS Capabilities</div>
<svg class="a" style="left:2765.0px;top:1252.0px;" width="18.0" height="22.0" viewBox="0 0 18.00 22.00" preserveAspectRatio="none"><path d="M3,2 L13,11 L3,20" fill="none" stroke="#d4d4d8" stroke-width="3.2" stroke-linecap="round" stroke-linejoin="round"/></svg>
<div class="a" style="left:2180.0px;top:1314.5px;width:638.0px;height:3.5px;background:#3f3f46"></div>
</body></html>
